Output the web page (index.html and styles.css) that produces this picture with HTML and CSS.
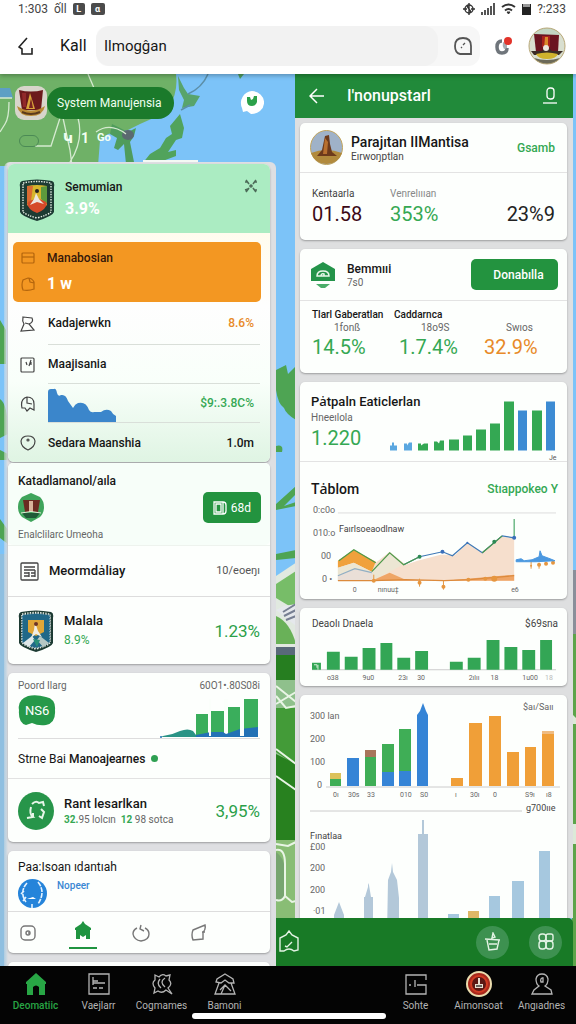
FILE: index.html
```html
<!DOCTYPE html>
<html lang="id">
<head>
<meta charset="utf-8">
<meta name="viewport" content="width=device-width, initial-scale=1">
<title>System Manujensia</title>
<link rel="stylesheet" href="styles.css">
</head>
<body>
<svg class="defs" width="0" height="0" aria-hidden="true">
  <defs>
    <symbol id="shield" viewBox="0 0 36 42">
      <path d="M3 2Q18-1 33 2Q36 3 35 8V33Q34 37 18 42Q2 37 1 33V8Q0 3 3 2Z" fill="#1d3b33"/>
      <path d="M4 4Q18 1 32 4V33Q29 36 18 39Q7 36 4 33Z" fill="none" stroke="#e8efe6" stroke-width="1.4" stroke-dasharray="1.4 1.2"/>
    </symbol>
    <symbol id="house" viewBox="0 0 22 22">
      <path d="M11 0L21 9V11H20V22H14V14Q11 11 8 14V22H2V11H1V9Z" fill="currentColor"/>
    </symbol>
  </defs>
</svg>

<header class="top">
  <div class="status">
    <div class="status-side"><span>1:303</span><span>ốll</span><span class="chip">L</span><span class="chip wide">α</span></div>
    <div class="status-side">
      <svg width="12" height="12" viewBox="0 0 12 12" fill="none" stroke="#333" stroke-width="1.4"><circle cx="6" cy="6" r="4"/><path d="M6 0V12M0 6H4M8 6H12M4 3L8 9"/></svg>
      <svg width="14" height="12" viewBox="0 0 14 12" fill="#555"><path d="M0 9H2V12H0ZM3 7H5V12H3ZM6 5H8V12H6ZM9 3H11V12H9ZM12 0H14V12H12Z"/></svg>
      <svg width="15" height="12" viewBox="0 0 15 12" fill="none" stroke="#333" stroke-width="2"><path d="M1 4Q7.500 -1 14 4M4 7.500Q7.500 4.500 11 7.500"/><path d="M6 9H9L7.500 11Z" fill="#333" stroke-width="1"/></svg>
      <svg width="9" height="12" viewBox="0 0 9 12"><path d="M0 1H9V12H0Z" fill="#222"/><path d="M1 1H8V4H1Z" fill="#999"/></svg>
      <span>?:233</span>
    </div>
  </div>
  <div class="bar">
    <button class="icon-btn" aria-label="Kembali"><svg width="16" height="19" viewBox="0 0 16 19" fill="none" stroke="#222" stroke-width="1.600"><path d="M9 1L1 10L4 12V17H14V11"/></svg></button>
    <label class="bar-title" for="q">Kall</label>
    <div class="search">
      <input id="q" type="text" value="Ilmogĝan">
      <button class="icon-btn" aria-label="Riwayat"><svg width="18" height="18" viewBox="0 0 18 18" fill="none" stroke="#555" stroke-width="1.800"><path d="M17 17H6Q1 16 1 9Q1 1 9 1Q17 1 17 9Z"/><path d="M7 11L8 10M9 8L11 6" stroke-width="1.300"/></svg></button>
    </div>
    <button class="icon-btn bell" aria-label="Notifikasi"><svg width="18" height="19" viewBox="0 0 18 19"><path d="M8 4Q3 4 3 10Q3 16 8 16Q13 16 13 11" fill="none" stroke="#6f757b" stroke-width="3.500"/><path d="M9 5Q8 9 10 12L13 11V7Z" fill="#a9aeb3"/><circle cx="14" cy="4" r="4" fill="#e2332a"/></svg></button>
    <button class="icon-btn" aria-label="Profil"><svg width="38" height="38" viewBox="0 0 38 38"><defs><clipPath id="av"><circle cx="19" cy="19" r="18"/></clipPath></defs><g clip-path="url(#av)"><path d="M0 0H38V38H0Z" fill="#d9dfd0"/><path d="M0 0H38V8H0Z" fill="#c3d5c3"/><path d="M6 7L31 8L30 25H8Z" fill="#6a1420"/><path d="M14 9H22V20H14Z" fill="#a8201b"/><path d="M17 10H20V22H16Z" fill="#d98a2b"/><path d="M3 24H14L18 18L24 24H35L31 28H6Z" fill="#3b2b24"/><circle cx="18" cy="21" r="3" fill="#ece7dd"/><path d="M8 27Q19 24 30 27Q28 32 19 32Q10 32 8 27Z" fill="#d0b32d"/><path d="M6 31Q19 35 32 31L28 38H10Z" fill="#6c6a59"/></g><circle cx="19" cy="19" r="18" fill="none" stroke="#b9a878"/></svg></button>
  </div>
</header>

<main class="stage">
  <svg class="map" viewBox="0 0 576 892" preserveAspectRatio="xMidYMin slice" aria-hidden="true">
    <path d="M0 0H576V892H0Z" fill="#7cc3f8"/>
    <path d="M0 0H176Q178 14 172 28L158 42L140 50L128 56L108 60L100 66L98 92H0Z" fill="#6fb167"/>
    <path d="M0 14H10L13 24H0Z" fill="#5d9fc4"/>
    <path d="M112 50L128 58L136 54L134 62L130 68L134 88L126 90L124 70L118 76L114 74L117 64L110 60Z" fill="#4f9c5c"/>
    <ellipse cx="128" cy="61" rx="6" ry="5" fill="#5b6a70"/>
    <path d="M178 2L184 14L188 20L200 22L194 32L182 34L184 26L179 16Z" fill="#58a46b"/>
    <path d="M180 40L184 54L182 64L176 66L168 78L176 76V82L160 88L142 90L150 80L160 74L166 64L172 60L170 52Z" fill="#51a35c"/>
    <path d="M188 20Q202 14 208 0M181 36L190 31" fill="none" stroke="#5c8fa8" stroke-width="1.500"/>
    <path d="M238 0H244L240 5Z" fill="#4f9c5c"/>
    <g fill="none" stroke="#d5ead0" stroke-width="1.300"><path d="M0 24H12M9 28Q9 44 5 50L0 58M88 0L94 14M60 44L51 72H35M63 44L70 76L72 92M78 44Q84 66 70 88M96 58Q110 48 126 60"/></g>
    <g fill="#4ea453"><path d="M0 246L6 256V290H0ZM0 325Q8 330 8 360L0 364ZM0 376L8 380V386H0ZM0 445L8 456V470L0 464Z"/>
    <path d="M276 296L286 291L288 300L296 292V346Q286 340 284 334Q278 330 276 316ZM276 372Q284 370 282 378H276ZM276 430L296 412V420L284 432L296 428V432L276 436ZM276 480L296 476V484L276 486ZM570 300H576V345H570Z"/></g>
    <path d="M0 480H10V892H0Z" fill="#8fbfe0"/>
    <path d="M276 502L300 486H576V892H276Z" fill="#e1e9e0"/>
    <path d="M276 510L296 497V536L276 524Z" fill="#77bd68"/>
    <path d="M276 542Q290 548 296 570H276Z" fill="#69b158"/>
    <path d="M276 536L296 552V530L284 532Z" fill="#e5e8ec"/>
    <path d="M283 538L296 530M284 542L296 536M286 546L296 542" stroke="#777f92" stroke-width="2"/>
    <path d="M276 573H296V584H276Z" fill="#59697a"/>
    <path d="M276 581H296V606H276Z" fill="#267e20"/>
    <path d="M276 606H296V694H276Z" fill="#8fc08c"/>
    <path d="M276 634H296V692L276 678Z" fill="#439b38"/>
    <path d="M276 680L296 690V770H276Z" fill="#28811f"/>
    <path d="M276 766H296V892H276Z" fill="#89bd75"/>
    <path d="M276 778Q284 784 285 794V824L276 828Z" fill="#77a570"/>
    <g fill="none" stroke="#e9f5e5" stroke-width="2"><path d="M276 612L296 628M276 630L296 618M276 622L286 634L296 632M276 675L296 690M276 702L296 716M276 770L288 772L296 768"/><path d="M276 776Q285 774 285 790V822Q282 828 276 826M285 822L292 828L296 827"/></g>
    <path d="M567 0H576V892H567Z" fill="#7cc3f8"/>
    <path d="M572 496H576V560H572Z" fill="#8a8f9a"/>
    <path d="M572 560H576V892H572Z" fill="#5da44a"/>
    <path d="M572 750H576V770H572ZM572 640L576 644V650H572Z" fill="#dcead8"/>
  </svg>

  <section class="left">
    <div class="map-head">
      <div class="pill-row">
        <svg width="32" height="34" viewBox="0 0 32 34"><rect width="32" height="34" rx="9" fill="#d8d5cb"/><path d="M4 4Q16 7 28 4L26 24H7Z" fill="#6c1a1c"/><path d="M7 7H11V21H8Z" fill="#91292a"/><path d="M15 7L20 23H11Z" fill="#d9a53b"/><path d="M16 12L18 22H14Z" fill="#7a2420"/><path d="M2 20Q16 29 30 20Q28 30 16 30Q4 30 2 20Z" fill="#b98a35"/><path d="M7 26Q16 30 25 26" fill="none" stroke="#5b3a1c" stroke-width="2"/></svg>
        <button class="pill">System Manujensia</button>
        <svg class="pin" width="24" height="24" viewBox="0 0 24 24"><path d="M12 0A12 11 0 1 1 11 23L7 20L3 21L2 17A12 12 0 0 1 12 0Z" fill="#fff"/><path d="M7 6H10L11 9L13 8L14 5H17V11Q16 15 12 15Q7 15 7 10Z" fill="#2ba14a"/></svg>
      </div>
      <div class="layer-row">
        <input class="toggle" type="checkbox" aria-label="Lapisan">
        <span>Կ</span><span>1</span><span class="small">Go</span>
      </div>
      <div class="drag"></div>
    </div>

    <div class="sheet">
      <article class="card region">
        <header class="mint">
          <svg width="36" height="42" viewBox="0 0 36 42"><use href="#shield"/><path d="M8 7Q18 5 28 7V26Q18 34 8 26Z" fill="#d5b52c"/><path d="M8 7L14 7L12 22L8 24Z" fill="#d96b31"/><path d="M22 8L28 7V25L22 20Z" fill="#5d9a3c"/><path d="M8 24Q18 16 28 24Q27 31 18 34Q9 31 8 24Z" fill="#d54a2a"/><circle cx="18" cy="12" r="2" fill="#222"/><path d="M17 14L20 20L25 25L18 23L11 26L15 20Z" fill="#ece6df"/></svg>
          <div class="grow"><h2 class="name">Semumian</h2><p class="white-num">3.9%</p></div>
          <button class="icon-btn" aria-label="Perbesar"><svg width="14" height="14" viewBox="0 0 14 14" fill="none" stroke="#4c6b58" stroke-width="1.600"><path d="M2 1L5 5M1 3H4M12 1L9 5M10 3H13M2 13L5 9M1 11L4 10M12 13L9 9M10 11H13"/><circle cx="7" cy="7" r="1"/></svg></button>
        </header>
        <div class="region-body">
          <div class="orange">
            <svg width="14" height="12" viewBox="0 0 14 12" fill="none" stroke="#b3650d" stroke-width="1.200"><rect x="1" y="1" width="12" height="10" rx="1"/><path d="M1 5H13"/></svg>
            <span class="name">Manabosian</span>
            <svg width="14" height="14" viewBox="0 0 14 14" fill="none" stroke="#b3650d" stroke-width="1.200"><path d="M2 13Q0 8 2 3L7 1Q11 1 13 5V12Q8 14 2 13ZM8 1L9 5L13 6"/></svg>
            <span class="white-num">1 w</span>
          </div>
          <ul class="rows">
            <li><svg width="16" height="16" viewBox="0 0 16 16" class="line"><path d="M3 1L12 2Q14 6 9 8L14 14L1 15L4 8Q2 5 3 1ZM5 7L9 8"/></svg><div><span class="name">Kadajerwkn</span><b class="amber">8.6%</b></div></li>
            <li><svg width="16" height="16" viewBox="0 0 16 16" class="line"><rect x="1" y="1" width="13" height="14" rx="1"/><path d="M6 5L7 8M11 3L9 9M11 5V8"/></svg><div><span class="name">Maajisania</span></div></li>
            <li><svg width="16" height="16" viewBox="0 0 16 16" class="line"><path d="M2 12Q0 3 7 1Q14 1 14 8V14L10 12L7 15L5 12ZM7 1V7L12 8"/></svg><div><svg class="spark" width="69" height="34" viewBox="0 0 69 34"><path d="M0 34V4Q0 1 3 1H6Q8 0 9 5Q10 9 13 7Q18 6 20 13L25 20Q27 16 30 15Q38 13 41 22Q43 25 46 24H53Q58 20 63 23Q65 27 68 28V34Z" fill="#3b86cb"/></svg><b class="leaf">$9:.3.8C%</b></div></li>
            <li><svg width="16" height="16" viewBox="0 0 16 16" class="line"><path d="M8 15Q1 12 1 6Q2 1 8 1Q14 1 15 6Q15 12 8 15Z"/><circle cx="8" cy="5" r="1"/></svg><div><span class="name">Sedara Maanshia</span><b>1.0m</b></div></li>
          </ul>
        </div>
      </article>

      <article class="card">
        <div class="card-pad kata">
          <div class="grow">
            <h2 class="name">Katadlamanol/aıla</h2>
            <svg width="26" height="29" viewBox="0 0 26 29"><path d="M13 0L22 4Q26 8 26 14Q26 20 22 24L13 29L4 24Q0 20 0 14Q0 8 4 4Z" fill="#3fa45b"/><path d="M5 7H22L20 19H7Z" fill="#6b2a20"/><path d="M11 8H15V19H11Z" fill="#d8b49a"/><path d="M4 20H22L18 25H8Z" fill="#1f5a37"/><path d="M3 20Q13 17 23 20" stroke="#e1ead4" fill="none"/></svg>
            <p class="sub">Enalclilarc Umeoha</p>
          </div>
          <button class="green-btn"><svg width="14" height="14" viewBox="0 0 14 14" fill="none" stroke="#fff" stroke-width="1.300"><path d="M1 1H10V13H1ZM3 3H8V11H3ZM10 1Q13 1 13 4V10Q13 13 10 13"/></svg>68d</button>
        </div>
        <div class="card-pad item doc">
          <svg width="19" height="19" viewBox="0 0 19 19" fill="none" stroke="#444" stroke-width="1.300"><rect x="1" y="1" width="17" height="17" rx="1"/><path d="M4 5H15M4 8H15M4 11H9M11 11H15M4 14H9M11 14H15M9 10V15M15 8V15"/></svg>
          <span class="mid-title grow">Meormdȧliay</span><span class="meta">10/eoeŋı</span>
        </div>
        <div class="card-pad item malala">
          <svg width="36" height="42" viewBox="0 0 36 42"><use href="#shield"/><path d="M4 5Q18 2 32 5V32Q28 36 18 38Q8 36 4 32Z" fill="#216888"/><path d="M4 5Q18 2 32 5V32Q28 36 18 38Q8 36 4 32Z" fill="none" stroke="#d9e6ec" stroke-dasharray="1.400 1.200"/><path d="M10 10H26V22L18 26L10 22Z" fill="#e0a637"/><path d="M17 12L20 21L24 27L18 24L13 28L16 20Z" fill="#f0ede6"/><circle cx="18" cy="14" r="2" fill="#6c3325"/><path d="M5 33L14 26L17 30L11 37Z" fill="#dfe7e8"/><path d="M31 33L22 26L19 30L25 37Z" fill="#b5c7c4"/><path d="M15 29L22 30L19 37Z" fill="#2a9078"/></svg>
          <div class="grow"><h2 class="mid-title">Malala</h2><p class="leaf small-num">8.9%</p></div><b class="big">1.23%</b>
        </div>
      </article>

      <article class="card">
        <div class="card-pad poord">
          <div class="split"><span class="sub">Poord Ilarg</span><span class="sub">60O1•.80S08i</span></div>
          <div class="split bottom">
            <svg class="blob" width="38" height="31" viewBox="0 0 38 31"><path d="M10 1Q18 -1 28 2Q38 4 37 15Q38 28 28 30Q20 31 14 28L8 30Q0 28 1 15Q-1 5 10 1Z" fill="#26994a"/><text x="7" y="20" class="t-white">NS6</text></svg>
            <svg width="100" height="40" viewBox="0 0 100 40"><path d="M36 16H48V39H36ZM51 13H64V39H51ZM68 9H80V39H68ZM84 1H98V39H84Z" fill="#3aae5c"/><path d="M3 38Q12 37 20 33Q28 30 33 33L36 37L48 36V39H1Z" fill="#2a9385"/><path d="M36 39V37L51 34H63L66 36L80 31L98 29V39Z" fill="#2271b5"/><path d="M49 1V38H51V1ZM64 1V32H68V1ZM80 1V38H84V1Z" fill="#fbfffb"/><circle cx="1" cy="39" r="1" fill="#2271b5"/></svg>
          </div>
        </div>
        <div class="card-pad item strne"><span class="strne-text"><span class="light">Strne Bai</span> Manoajearnes</span><span class="dot"></span></div>
        <div class="card-pad item rant">
          <svg width="36" height="38" viewBox="0 0 36 38"><ellipse cx="18" cy="19" rx="18" ry="19" fill="#27954a"/><g fill="none" stroke="#e7f6e9" stroke-width="2"><path d="M14 12Q18 8 21 11L25 10L26 14M13 15Q11 22 15 25L9 26M23 17L26 20L24 26L21 24"/><path d="M15 21V25"/></g></svg>
          <div class="grow"><h2 class="mid-title">Rant lesarlkan</h2><p class="sub"><b class="leaf">32.</b>95 lolcın &nbsp;<b class="leaf">12</b> 98 sotca</p></div><b class="big">3,95%</b>
        </div>
      </article>

      <article class="card">
        <div class="card-pad paa">
          <h2 class="name light">Paa:Isoan ıdantıah</h2>
          <div class="user"><svg width="29" height="29" viewBox="0 0 29 29"><circle cx="14.500" cy="14.500" r="14.500" fill="#2584da"/><path d="M9 4Q1 13 8 23M20 3Q28 13 20 25M14 25V29M3 15L6 12M5 22L8 18" stroke="#e5f3ff" stroke-width="1.600" fill="none" stroke-dasharray="5 1"/><path d="M9 20H18L15 18Z" fill="#fff"/></svg><a href="#nopeer">Nopeer</a></div>
        </div>
        <nav class="tabs" aria-label="Bagian">
          <button aria-label="Data"><svg width="16" height="16" viewBox="0 0 16 16" class="gray"><rect x="1" y="1" width="14" height="14" rx="4"/><circle cx="8" cy="8" r="2"/><path d="M8 8H10"/></svg></button>
          <button class="on" aria-label="Beranda"><svg width="18" height="18" viewBox="0 0 18 18"><path d="M9 0L11 3L17 7V9H16V18H12V14L9 16L6 14V18H2V9H1V7L7 3Z" fill="currentColor"/></svg></button>
          <button aria-label="Waktu"><svg width="18" height="18" viewBox="0 0 18 18" class="gray"><path d="M5 4Q1 6 1 10Q2 16 9 17Q17 16 17 10Q17 6 13 4M9 1L8 5L12 7"/></svg></button>
          <button aria-label="Bagikan"><svg width="16" height="18" viewBox="0 0 16 18" class="gray"><path d="M2 6L14 1Q15 6 12 8V15L2 16Q0 11 2 6ZM11 8H14"/></svg></button>
        </nav>
      </article>
      <article class="card peek"></article>
    </div>
  </section>

  <section class="right">
    <div class="panel">
      <header class="panel-head">
        <button class="icon-btn" aria-label="Kembali"><svg width="16" height="16" viewBox="0 0 16 16" fill="none" stroke="#fff" stroke-width="1.500"><path d="M8 1L1 8L8 15M1 8H15"/></svg></button>
        <h1>I'nonupstarl</h1>
        <button class="icon-btn" aria-label="Akun"><svg width="14" height="18" viewBox="0 0 14 18" fill="none" stroke="#fff" stroke-width="1.300"><rect x="4" y="1" width="7" height="11" rx="3"/><path d="M0 16H14"/></svg></button>
      </header>
      <div class="feed">
        <article class="card">
          <div class="who">
            <svg width="33" height="35" viewBox="0 0 33 35"><ellipse cx="16.500" cy="17.500" rx="16" ry="17" fill="#9fb2c8" stroke="#c1a45c"/><path d="M1 23Q16 17 32 23Q28 34 16.500 34Q5 34 1 23Z" fill="#b18a3c"/><path d="M15 6L19 5L20 14L22 22L27 26H7L12 20Z" fill="#6d3a1b"/><path d="M15 8L18 12L17 24H13Z" fill="#b8702f"/></svg>
            <div class="grow"><h2 class="title">Parajıtan IIMantisa</h2><p class="sub dark">Eırwoŋptlan</p></div>
            <a class="link" href="#gsamb">Gsamb</a>
          </div>
          <div class="stats a">
            <div><span class="sub dark">Kentaarla</span><b class="num maroon">01.58</b></div>
            <div><span class="sub pale">Venrelıııan</span><b class="num leaf">353%</b></div>
            <div><b class="num ink">23%9</b></div>
          </div>
        </article>

        <article class="card">
          <div class="who tall">
            <svg width="24" height="26" viewBox="0 0 24 26"><path d="M12 0L24 7V19H0V7Z" fill="#24944a"/><path d="M5 22H19L14 26H10Z" fill="#4aad69"/><path d="M6 14Q6 9 12 9Q18 9 18 14ZM10 14Q10 11 13 12V14" fill="none" stroke="#e9f7ec" stroke-width="1.500"/></svg>
            <div class="grow"><h2 class="name">Bemmııi</h2><p class="sub">7s0</p></div>
            <button class="green-btn wide-btn">Donabılla</button>
          </div>
          <div class="stats b">
            <div><span class="cap">Tlarl Gaberatlan</span><span class="sub mid">1fonß</span><b class="num leaf">14.5%</b></div>
            <div class="second"><span class="cap">Caddarnca</span><span class="sub mid">18o9S</span><b class="num leaf">1.7.4%</b></div>
            <div><span class="sub mid">Swıos</span><b class="num amber">32.9%</b></div>
          </div>
        </article>

        <article class="card">
          <div class="growth">
            <div class="growth-text"><h2 class="mid-title">Pȧtpaln Eaticlerlan</h2><p class="sub">Hneeılola</p><b class="num leaf">1.220</b></div>
            <svg class="growth-chart" viewBox="0 0 170 64" role="img" aria-label="Pertumbuhan"><g fill="#5aa7e0"><path d="M1 49H3V46H5V49H8V54H1ZM15 47H18V49L20 46H23V54H15Z"/></g><g fill="#34a853"><path d="M29 47H32V49L35 47H39V54H29ZM45 45H48L50 47L51 44H55V54H45ZM60 43H70V54H60ZM74 39H83V54H74ZM87 33H97V54H87ZM101 27H111V54H101ZM115 5H125V54H115ZM143 14H153V54H143Z"/></g><path d="M129 14H138V54H129ZM157 5H166V54H157Z" fill="#3d8bd3"/><text x="160" y="63" class="t-tiny">Je</text></svg>
          </div>
          <div class="tablom">
            <div class="split"><h2 class="title">Tȧblom</h2><button class="link select">Stıappokeo Y</button></div>
            <svg class="chart" viewBox="0 0 248 94" role="img" aria-label="Tablom">
              <path d="M27 12H246" stroke="#ddd"/>
              <g class="t-axis"><text x="2" y="12">0:c0o</text><text x="2" y="35">010:o</text><text x="10" y="58">00</text><text x="11" y="81">0 •</text><text x="28" y="31" class="t-dark">Faırlsoeaodlnaw</text></g>
              <path d="M27 60L43 49L65 62L79 51L95 64L107 60L130 54L145 54L157 42L172 52L190 36L204 37V80H27Z" fill="#f6dfcd"/>
              <path d="M27 60L43 49L65 61L61 71L43 62L27 67Z" fill="#f0a13c"/><path d="M27 67L43 62L61 71L79 52L92 64L62 80H27Z" fill="#ece6d3"/>
              <path d="M27 75L44 68L62 72V80H27Z" fill="#eadfd7"/><path d="M61 80L79 72L95 79L134 80L204 74V80Z" fill="#efa566"/>
              <g fill="none" stroke-width="1.200"><path d="M27 75L44 68L61 72" stroke="#91afc4"/><path d="M93 64L109 56L132 51L142 55L157 42L172 52L192 35L204 37" stroke="#3e79b7"/><path d="M28 60L43 49L65 62M61 71L79 52L93 64L109 56M172 52L192 35" stroke="#4d9a4a"/><path d="M204 37V18" stroke="#4ca96a"/><path d="M27 80H63L95 79L134 80L159 79L204 75" stroke="#dc8a3c"/></g>
              <g fill="#e6963f"><circle cx="63" cy="80" r="2"/><circle cx="109" cy="82" r="2"/><circle cx="133" cy="86" r="2"/><circle cx="158" cy="79" r="2"/><circle cx="175" cy="78" r="2"/><circle cx="184" cy="78" r="3"/><circle cx="221" cy="65" r="1"/><circle cx="229" cy="64" r="2"/><circle cx="236" cy="63" r="2"/><circle cx="243" cy="62" r="2"/><path d="M109 78V86M133 80V89M63 74V80M221 60V68M229 62V68" stroke="#e6963f"/></g>
              <circle cx="109" cy="56" r="2" fill="#2d8a55"/><circle cx="132" cy="51" r="2" fill="#3a6fbb"/><circle cx="157" cy="42" r="1" fill="#3a6fbb"/><circle cx="184" cy="41" r="2" fill="#2d8a55"/><circle cx="204" cy="37" r="2" fill="#3a6fbb"/>
              <path d="M206 59L211 58L214 60L222 59L229 56L230 50L232 55L240 58L245 60L226 61L206 61Z" fill="#4b98e0" stroke="#4b98e0"/>
              <g class="t-axis small"><text x="42" y="91">0</text><text x="67" y="91">nınuu‡</text><text x="201" y="91">e6</text></g>
            </svg>
          </div>
        </article>

        <article class="card pad">
          <div class="split"><span class="sub dark">Deaolı Dnaela</span><span class="sub dark">$69sna</span></div>
          <svg class="chart" viewBox="0 0 248 46" role="img" aria-label="Data bulanan"><path d="M0 34H246" stroke="#ccc"/><path d="M0 27H9V34H0ZM15 16H28V34H15ZM33 21H46V34H33ZM51 12H64V34H51ZM69 7H81V34H69ZM86 22H99V34H86ZM104 15H117V34H104ZM139 26H152V34H139ZM157 22H170V34H157ZM176 4H189V34H176ZM194 11H207V34H194ZM212 14H225V34H212ZM230 4H242V34H230Z" fill="#33a655"/><path d="M2 29H5V32M6 29V34" stroke="#d7f0d9" fill="none"/><g class="t-axis small"><text x="15" y="44">o38</text><text x="51" y="44">9u0</text><text x="87" y="44">23ı</text><text x="106" y="44">30</text><text x="158" y="44">2ılıı</text><text x="180" y="44">18</text><text x="212" y="44">1u00</text><text x="235" y="44" class="faint">18</text></g></svg>
        </article>

        <article class="card last">
          <svg class="chart" viewBox="0 0 267 240" role="img" aria-label="Statistik wilayah">
            <path d="M26 92H260M10 116H222" stroke="#ccc"/>
            <g class="t-axis"><text x="10" y="24">300 lan</text><text x="10" y="47">200</text><text x="10" y="70">100</text><text x="17" y="93">0</text><text x="223" y="15">$aı/Saıı</text><text x="226" y="116" class="t-dark">g700ııe</text><text x="10" y="144" class="t-dark">Fınatlaa</text><text x="10" y="155">£00</text><text x="10" y="176">200</text><text x="10" y="198">200</text><text x="13" y="219">·01</text></g>
            <path d="M30 84H41V91H30ZM65 62H76V91H65ZM82 49H94V77H82ZM99 34H111V76H99Z" fill="#3fae56"/><path d="M30 78H41V84H30Z" fill="#dcc25b"/><path d="M65 55H76V62H65Z" fill="#a8755b"/>
            <path d="M47 63H59V91H47ZM82 77H94V91H82ZM99 76H111V91H99ZM117 20L120 16L123 8L126 16L128 20V91H117Z" fill="#3584d6"/>
            <path d="M151 83H163V91H151ZM169 28H182V91H169ZM189 21H201V91H189ZM207 57H219V91H207ZM225 52H236V91H225ZM242 36H254V91H242Z" fill="#f09f38"/><path d="M242 36H254V39H242Z" fill="#efbc82"/>
            <g class="t-axis small"><text x="33" y="102">0ı</text><text x="48" y="102">30s</text><text x="67" y="102">33</text><text x="100" y="102">010</text><text x="120" y="102">S0</text><text x="155" y="102">ı</text><text x="170" y="102">30ı</text><text x="193" y="102">0</text><text x="225" y="102">S9ı</text><text x="246" y="102">ı8</text></g>
            <path d="M34 240V220L39 207L44 220V240ZM64 240V202H65L68 192V188L69 190L71 202H73V240ZM87 240L88 185L91 177L92 168L93 177L97 185L99 203V240ZM118 240V139H122V125H124V139H128V240Z" fill="#b3c8d9"/>
            <path d="M148 219H159V240H148ZM189 201H200V240H189ZM212 186H224V240H212ZM239 156H250V240H239Z" fill="#a6c8df"/><path d="M168 216H179V240H168Z" fill="#dfb866"/>
          </svg>
        </article>
      </div>
    </div>
    <div class="dock">
      <button class="icon-btn" aria-label="Rumah"><svg width="20" height="24" viewBox="0 0 20 24" fill="none" stroke="#e3f3e4" stroke-width="1.400"><path d="M1 21V8L7 5L10 1L13 5L19 8V20L15 21Q10 17 5 21ZM6 16L8 17L13 12"/></svg></button>
      <button class="round" aria-label="Keranjang"><svg width="18" height="20" viewBox="0 0 18 20" fill="none" stroke="#e3f3e4" stroke-width="1.400"><path d="M1 7L16 8M3 8L5 18L13 17L15 8M5 12H13M9 1L8 6L11 5Z"/></svg></button>
      <button class="round" aria-label="Menu"><svg width="18" height="18" viewBox="0 0 18 18" fill="none" stroke="#e3f3e4" stroke-width="1.400"><rect x="2" y="1" width="7" height="7" rx="3"/><rect x="9" y="1" width="7" height="7" rx="2"/><rect x="2" y="8" width="7" height="8" rx="3"/><rect x="9" y="8" width="7" height="8" rx="3"/></svg></button>
    </div>
  </section>
</main>

<nav class="nav" aria-label="Utama">
  <div>
    <a class="on" href="#a"><svg width="22" height="22"><use href="#house"/></svg>Deomatiic</a>
    <a href="#b"><svg width="22" height="22" viewBox="0 0 22 22"><path d="M1 1H21V21H1ZM5 4V8H10M5 8V12M5 10H17M5 15H9M11 15H15"/></svg>Vaejlarr</a>
    <a href="#c"><svg width="22" height="22" viewBox="0 0 22 22"><path d="M4 2L8 4Q11 0 15 3L19 2L18 7Q22 11 17 15L21 21L15 17Q11 21 7 18L3 20L4 15Q0 10 4 7ZM9 6Q5 11 10 15M14 5Q8 9 14 14"/></svg>Cogmames</a>
    <a href="#d"><svg width="22" height="22" viewBox="0 0 22 22"><path d="M11 1L19 6L20 10H15L11 7L7 10L2 9L3 6ZM5 10L1 21H21L17 10M6 17L11 12L17 18M11 12L7 21"/></svg>Bamoni</a>
  </div>
  <div>
    <a href="#e"><svg width="22" height="22" viewBox="0 0 22 22"><path d="M21 7V2H1V21H21V12H16M4 12H6M10 7V14M12 12H16"/></svg>Sohte</a>
    <a href="#f"><svg class="seal" width="28" height="28" viewBox="0 0 28 28"><circle cx="14" cy="14" r="12" fill="#a8281c" stroke="#eadcae" stroke-width="2"/><circle cx="14" cy="14" r="8" fill="#5c1714" stroke="#d13a22" stroke-width="2"/><path d="M13 8H15V14H18V18H10V14H13Z" fill="#e9ddd0" stroke="none"/><path d="M11 16H17" stroke="#222"/></svg>Aimonsoat</a>
    <a href="#g"><svg width="22" height="22" viewBox="0 0 22 22"><path d="M8 13Q5 11 5 6Q6 1 11 1Q16 1 17 6Q17 11 14 13L20 17L21 21H1L3 17ZM11 5Q9 6 10 9H12V5Z"/></svg>Angıadnes</a>
  </div>
  <span class="home-bar"></span>
</nav>
</body>
</html>
```
FILE: styles.css
```css
* { box-sizing: border-box; }
body {
  margin: 0;
  min-height: 100vh;
  display: flex;
  flex-direction: column;
  font: 12px/16px Roboto, "Noto Sans", "DejaVu Sans", sans-serif;
  color: #161616;
  background: #fff;
}
h1, h2, p, ul { margin: 0; padding: 0; }
h1, h2 { font-weight: 500; }
ul { list-style: none; }
button { font: inherit; color: inherit; border: 0; padding: 0; background: none; cursor: pointer; }
a { text-decoration: none; }
svg { flex: none; display: block; }
.defs { position: absolute; }
.grow { flex: 1; min-width: 0; }
.icon-btn { display: grid; place-items: center; }

/* Top bar */
.top { background: #fff; box-shadow: 0 2px 4px rgba(0,0,0,.25); position: relative; z-index: 2; }
.status { display: flex; justify-content: space-between; height: 18px; padding: 0 10px 0 18px; color: #444; }
.status-side { display: flex; align-items: center; gap: 6px; }
.chip { width: 12px; height: 12px; border-radius: 2px; background: #4b4b4b; color: #fff; font: bold 9px/12px Roboto, sans-serif; text-align: center; }
.chip.wide { width: 14px; }
.bar { display: flex; align-items: center; height: 56px; padding: 0 10px 0 18px; }
.bar-title { font-size: 16px; line-height: 20px; width: 36px; margin-left: 26px; white-space: nowrap; }
.search { flex: 1; min-width: 0; height: 40px; display: flex; align-items: center; background: #f7f7f7; border-radius: 12px; padding-right: 8px; }
.search input { flex: 1; min-width: 0; height: 40px; border: 0; border-radius: 14px; background: #f2f2f2; padding: 0 8px; font: 15px Roboto, sans-serif; color: #161616; margin-right: 16px; }
.bell { margin: 0 16px 0 14px; }

/* Main stage */
.stage { position: relative; flex: 1; display: grid; grid-template-columns: 23fr 25fr; overflow: hidden; }
.map { position: absolute; inset: 0; width: 100%; height: 100%; }
.left, .right { position: relative; min-width: 0; }
.left { padding-left: 4px; display: flex; flex-direction: column; }
.map-head { padding: 12px 12px 0 11px; height: 88px; }
.pill-row { display: flex; align-items: center; }
.pill { height: 32px; padding: 0 12px 0 10px; border-radius: 16px; background: #1b7a2b; color: #f0fff0; }
.pin { margin-left: auto; }
.layer-row { display: flex; gap: 8px; align-items: center; height: 32px; padding: 0 0 0 4px; color: #f2fff0; font-size: 14px; font-weight: 700; margin-top: 2px; }
.layer-row .small { font-size: 11px; }
.toggle { appearance: none; width: 20px; height: 12px; margin: 6px 16px 0 0; border: 1px solid #4b8a55; border-radius: 6px; }
.drag { width: 55px; height: 2px; background: #f4f9f4; margin: 6px 0 0 128px; }

.sheet { flex: 1; padding: 2px 6px 0 4px; background: linear-gradient(90deg, rgba(222,224,226,.4), #dedfe2 4px, #dedfe2); display: flex; flex-direction: column; gap: 9px; border-radius: 6px 6px 0 0; }
.card { background: #fdfffd; border-radius: 5px; box-shadow: 0 1px 2px rgba(0,0,0,.3); }
.name { font-size: 12px; line-height: 16px; font-weight: 500; }
.title { font-size: 14px; line-height: 18px; font-weight: 500; }
.mid-title { font-size: 13px; line-height: 18px; font-weight: 500; }
.light { font-weight: 400; }
.sub { font-size: 10px; line-height: 14px; color: #666; }
.sub.dark { color: #444; }
.sub.pale { color: #888; }
.leaf { color: #35a853; }
.amber { color: #e88a28; }
.big { font-size: 17px; line-height: 20px; font-weight: 400; color: #2ba048; }
.white-num { color: #fff; font-size: 16px; line-height: 20px; font-weight: 700; }
.split { display: flex; justify-content: space-between; }
.item { display: flex; align-items: center; }
.card-pad { padding: 0 10px; }

.region { overflow: hidden; border-radius: 6px; margin-bottom: -8px; }
.mint { height: 69px; display: flex; gap: 10px; padding: 15px 12px 0 11px; background: #abecc2; }
.mint .icon-btn { align-self: start; }
.mint .white-num { margin-top: 4px; }
.region-body { padding: 9px 9px 0 5px; background: linear-gradient(#fffcee, #fefefe 32%, #f9fffa 65%, #dff4e3); }
.orange { display: grid; grid-template-columns: 14px 1fr; gap: 8px 12px; align-items: center; height: 60px; padding: 8px; border-radius: 5px; background: #f39722; color: #35180a; align-content: center; }
.rows li { display: flex; align-items: center; gap: 12px; padding-left: 7px; }
.rows li > div { flex: 1; height: 39px; display: flex; align-items: center; justify-content: space-between; border-bottom: 1px solid #d9dfd9; margin-right: 1px; padding-right: 6px; }
.rows li:first-child > div { height: 43px; }
.rows li:last-child > div { border: 0; }
.rows b { font-weight: 500; }
.rows .spark { align-self: end; }
.line { fill: none; stroke: #444; stroke-width: 1.2; }
.gray { fill: none; stroke: #777; stroke-width: 1.4; }

.green-btn { display: flex; align-items: center; justify-content: center; gap: 4px; height: 31px; padding: 0 10px; border-radius: 5px; background: #23933f; color: #fff; }
.kata { display: flex; align-items: center; padding-top: 7px; height: 82px; padding-right: 9px; border-radius: 5px; background: #f7fef9; }
.kata svg { margin: 4px 0 6px; }
.kata .green-btn svg { margin: 0; }
.doc { height: 52px; gap: 10px; border-bottom: 1px solid #ddd; padding-left: 12px; border-top: 1px solid #eef3ee; }
.doc .mid-title { padding-bottom: 0; }
.meta { font-size: 11px; color: #555; }
.malala { height: 67px; gap: 10px; }
.small-num { font-size: 12px; line-height: 20px; }

.poord { padding-top: 6px; }
.bottom { align-items: end; border-bottom: 1px solid #ddd; height: 46px; }
.blob { margin-bottom: 12px; }
.t-white { font-size: 13px; fill: #fff; }
.strne { height: 40px; gap: 6px; border-bottom: 1px solid #e2e2e2; }
.strne-text { font-weight: 500; }
.strne .light { font-weight: 400; }
.dot { width: 7px; height: 7px; border-radius: 50%; background: #2fa052; }
.rant { height: 63px; gap: 10px; }

.paa { padding-top: 8px; height: 61px; border-bottom: 1px solid #ddd; }
.user { display: flex; gap: 10px; margin-top: 4px; }
.user a { font-size: 10px; line-height: 14px; color: #3a87d3; font-weight: 500; }
.tabs { height: 41px; display: flex; padding-left: 9px; gap: 30px; }
.tabs button { width: 28px; display: grid; place-items: center; }
.tabs button:first-child { width: 22px; }
.tabs .on { color: #1f9440; border-bottom: 2px solid; margin: 0 0 4px; }
.peek { height: 40px; margin-bottom: -36px; }

/* Right panel */
.right { display: flex; flex-direction: column; }
.panel { flex: 1; min-height: 0; margin: 0 3px 0 19px; background: #dedfe0; display: flex; flex-direction: column; }
.panel-head { height: 44px; background: #218a3a; color: #fff; display: flex; align-items: center; gap: 22px; padding: 0 16px 0 14px; }
.panel-head h1 { flex: 1; font-size: 16px; line-height: 20px; }
.feed { padding: 5px 6px 0 5px; display: flex; flex-direction: column; gap: 9px; }
.who { display: flex; align-items: center; gap: 8px; height: 50px; padding: 0 12px 0 10px; border-bottom: 1px solid #e3e3e3; }
.who.tall { height: 52px; gap: 12px; padding: 0 9px 0 11px; }
.who .sub { line-height: 12px; }
.wide-btn { width: 87px; padding: 0 0 0 8px; font-weight: 500; }
.link { color: #34a853; font-weight: 500; }
.num { display: block; font-size: 20px; line-height: 26px; font-weight: 400; }
.maroon { color: #3b0916; }
.ink { color: #222; }
.stats { display: grid; padding: 0 12px; }
.stats > div { display: flex; flex-direction: column; justify-content: end; }
.stats.a { grid-template-columns: 78px 1fr auto; height: 67px; padding-bottom: 13px; }
.stats.b { grid-template-columns: 82px 1fr 74px; height: 72px; padding: 0 9px 13px 12px; }
.second .mid, .second .num { margin-left: 5px; }
.cap { font-size: 10px; line-height: 14px; font-weight: 500; white-space: nowrap; }
.mid { padding-left: 22px; line-height: 12px; }
.growth { display: flex; justify-content: space-between; padding: 11px 9px 0 11px; height: 80px; border-bottom: 1px solid #e3e3e3; }
.growth-text { width: 78px; white-space: nowrap; }
.growth-chart { width: 170px; margin-top: 3px; flex: 0 1 170px; overflow: visible; }
.tablom { padding: 18px 9px 0 11px; }
.select { font-size: 12px; }
.chart { width: 100%; height: auto; overflow: hidden; }
.tablom .chart { margin-top: 3px; margin-bottom: 4px; }
.t-axis { font-size: 9px; fill: #666; }
.t-axis.small { font-size: 7px; }
.t-tiny { font-size: 7px; fill: #555; }
.t-dark { fill: #444; }
.faint { fill: #bbb; }
.pad { padding: 9px 9px 0 12px; }
.pad .chart { margin-top: 5px; margin-bottom: 5px; }
.last { border-radius: 5px 5px 0 0; margin-bottom: -18px; }
.dock { position: relative; height: 48px; margin-right: 3px; background: #187a26; border-radius: 0 5px 0 0; display: flex; align-items: center; padding: 0 11px 0 3px; gap: 20px; }
.dock .icon-btn { margin-right: auto; }
.round { width: 33px; height: 33px; border-radius: 50%; background: #3d9150; display: grid; place-items: center; }

/* Bottom navigation */
.nav { position: relative; z-index: 2; background: #040404; height: 58px; display: flex; justify-content: space-between; padding: 7px 3px 0 4px; }
.nav > div { display: flex; }
.nav a { width: 63px; display: flex; flex-direction: column; align-items: center; gap: 4px; color: #b4b4b4; font-size: 10px; line-height: 14px; }
.nav a svg { fill: none; stroke: #b4b4b4; stroke-width: 1.3; }
.nav a.on { color: #28a645; font-weight: 500; }
.nav a.on svg { stroke: none; }
.nav .seal { margin: -3px 0; stroke: none; }
.home-bar { position: absolute; left: 50%; bottom: 5px; width: 194px; height: 6px; margin-left: -96px; border-radius: 3px; background: #fff; }
```
